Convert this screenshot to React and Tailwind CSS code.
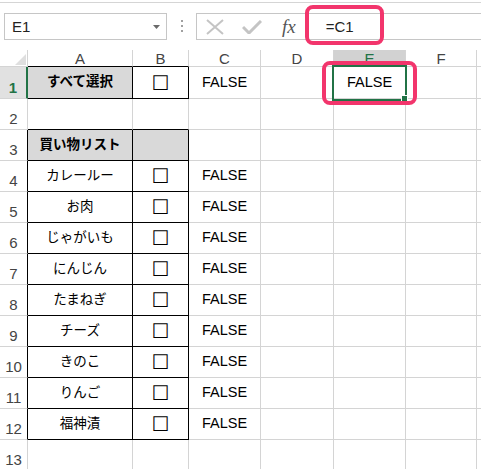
import React from "react";

const GRID = "grid grid-cols-[28px_105px_56px_72px_73px_72px_71px_40px]";
const G = "border-r border-b";

const items = ["カレールー", "お肉", "じゃがいも", "にんじん", "たまねぎ", "チーズ", "きのこ", "りんご", "福神漬"];

function Box() {
  return <span className="font-['DejaVu_Sans',sans-serif] text-[20px] leading-none text-black">☐</span>;
}

function HeaderRow() {
  const cols = ["A", "B", "C", "D", "E", "F"];
  return (
    <div className={`${GRID} h-[17px]`}>
      <div className={`${G} border-r-[#d4d4d4] border-b-[#d4d4d4] relative`}>
        <svg className="absolute right-[1px] bottom-[1px]" width="11" height="11" viewBox="0 0 11 11">
          <polygon points="11,0 11,11 0,11" fill="#dfdfdf" />
        </svg>
      </div>
      {cols.map((c) => (
        <div
          key={c}
          className={`${G} border-r-[#d4d4d4] flex items-end justify-center pb-[0px] text-[15px] leading-none ${
            c === "A" || c === "B" ? "border-b-black" : c === "E" ? "border-b-[#217346]" : "border-b-[#d4d4d4]"
          } ${c === "E" ? "bg-[#d2d2d2] text-[#217346]" : "bg-white text-[#444]"}`}
        >
          {c}
        </div>
      ))}
      <div className={`${G} border-r-[#d4d4d4] border-b-[#d4d4d4]`} />
    </div>
  );
}

function RowHeader({ n, kind }) {
  if (kind === "sel") {
    return (
      <div className="border-r-2 border-b border-r-[#217346] border-b-[#d4d4d4] bg-[#e1e1e1] flex items-end justify-center pb-[3px] text-[15px] leading-none text-[#217346] font-semibold">
        {n}
      </div>
    );
  }
  return (
    <div
      className={`${G} ${kind === "black" ? "border-r-black" : "border-r-[#d4d4d4]"} border-b-[#d4d4d4] flex items-end justify-center pb-[3px] text-[15px] leading-none text-[#444]`}
    >
      {n}
    </div>
  );
}

function Row({ n, h, rh, a, aBold, aGray, aR, aB, b, bGray, bR, bB, c, e }) {
  return (
    <div className={`${GRID} ${h}`}>
      <RowHeader n={n} kind={rh} />
      <div
        className={`${G} ${aR ? "border-r-black" : "border-r-[#d4d4d4]"} ${aB ? "border-b-black" : "border-b-[#d4d4d4]"} ${
          aGray ? "bg-[#d9d9d9]" : "bg-white"
        } flex items-center justify-center text-[13.5px] text-black ${aBold ? "font-bold" : "font-normal"}`}
      >
        {a}
      </div>
      <div
        className={`${G} ${bR ? "border-r-black" : "border-r-[#d4d4d4]"} ${bB ? "border-b-black" : "border-b-[#d4d4d4]"} ${
          bGray ? "bg-[#d9d9d9]" : "bg-white"
        } flex items-center justify-center`}
      >
        {b ? <Box /> : null}
      </div>
      <div className={`${G} border-r-[#d4d4d4] border-b-[#d4d4d4] flex items-center justify-center text-[14.5px] text-black`}>{c}</div>
      <div className={`${G} border-r-[#d4d4d4] border-b-[#d4d4d4]`} />
      <div className={`${G} border-r-[#d4d4d4] border-b-[#d4d4d4] flex items-center justify-center text-[14.5px] text-black`}>{e}</div>
      <div className={`${G} border-r-[#d4d4d4] border-b-[#d4d4d4]`} />
      <div className={`${G} border-r-[#d4d4d4] border-b-[#d4d4d4]`} />
    </div>
  );
}

export default function App() {
  return (
    <div className="relative w-[481px] h-[469px] overflow-hidden bg-white font-['Liberation_Sans','Noto_Sans_CJK_JP',sans-serif]">
      <div className="h-[2px]" />
      <div className="h-[1px] bg-[#d5d5d5]" />
      {/* toolbar */}
      <div className="h-[47px] flex items-start pt-[10px] pl-[4px]">
        <div className="w-[163px] h-[27px] border border-[#c6c6c6] flex items-center pl-[7px] pr-[6px] justify-between">
          <span className="text-[15px] text-[#222] leading-none">E1</span>
          <svg width="7" height="4" viewBox="0 0 7 4">
            <polygon points="0,0 7,0 3.5,4" fill="#6a6a6a" />
          </svg>
        </div>
        <div className="ml-[14px] mt-[7px] flex flex-col gap-[3px]">
          <div className="w-[2px] h-[2px] bg-[#a0a0a0]" />
          <div className="w-[2px] h-[2px] bg-[#a0a0a0]" />
          <div className="w-[2px] h-[2px] bg-[#a0a0a0]" />
        </div>
        <div className="ml-[13px] flex-1 h-[27px] border-t border-b border-l border-[#c6c6c6] flex items-center">
          <svg className="ml-[9px]" width="18" height="16" viewBox="0 0 18 16">
            <path d="M1 1 L17 15 M17 1 L1 15" stroke="#c4c4c4" strokeWidth="2" fill="none" />
          </svg>
          <svg className="ml-[18px]" width="20" height="14" viewBox="0 0 20 14">
            <path d="M1 7 L7 13 L19 1" stroke="#c4c4c4" strokeWidth="3" fill="none" />
          </svg>
          <span className="ml-[20px] font-['Liberation_Serif',serif] italic text-[19px] leading-none text-[#555]">fx</span>
          <div className="ml-[11px] h-full border-l border-[#c6c6c6]" />
          <span className="ml-[18px] text-[15px] leading-none text-[#222]">=C1</span>
        </div>
      </div>
      {/* sheet */}
      <HeaderRow />
      <Row n={1} h="h-[32px]" rh="sel" a="すべて選択" aBold aGray aR aB b bR bB c="FALSE" e="FALSE" />
      <Row n={2} h="h-[31px]" rh="gray" aB bB />
      <Row n={3} h="h-[31px]" rh="black" a="買い物リスト" aBold aGray aR aB bGray bR bB />
      {items.map((it, i) => (
        <Row key={it} n={i + 4} h="h-[31px]" rh="black" a={it} aR aB b bR bB c="FALSE" />
      ))}
      <Row n={13} h="h-[31px]" rh="gray" />

      {/* selection */}
      <div className="absolute left-[332px] top-[65px] w-[75px] h-[36px] border-2 border-[#217346]" />
      <div className="absolute left-[401px] top-[95px] w-[7px] h-[7px] bg-[#217346] border border-white" />

      {/* highlight boxes */}
      <div className="absolute left-[305px] top-[5px] w-[79px] h-[40px] rounded-[8px] border-[4px] border-[#f2356c]" />
      <div className="absolute left-[322px] top-[61px] w-[95px] h-[44px] rounded-[8px] border-[4px] border-[#f2356c]" />
    </div>
  );
}
